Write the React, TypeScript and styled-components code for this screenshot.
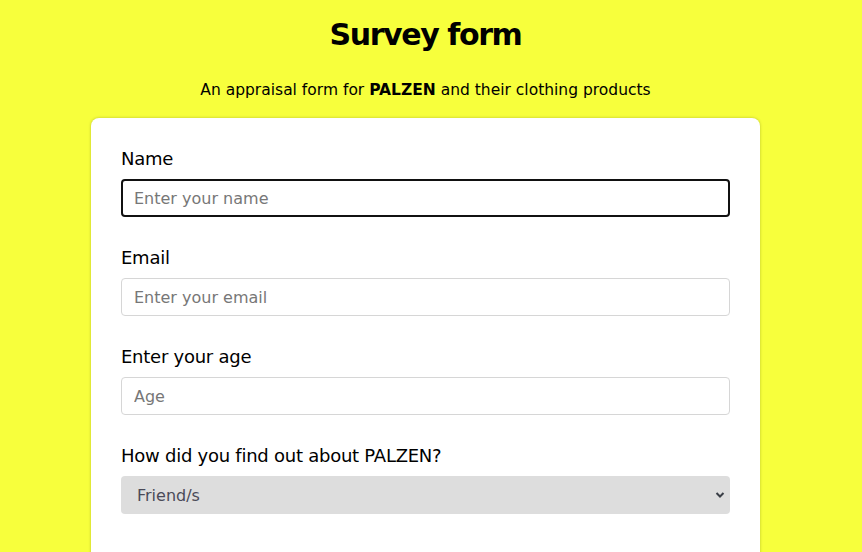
import React from "react";
import styled, { createGlobalStyle } from "styled-components";

const Global = createGlobalStyle`
  html, body { margin: 0; padding: 0; }
  body {
    background: #f7ff3c;
    font-family: "DejaVu Sans", "Noto Sans", sans-serif;
    color: #000;
  }
  * { box-sizing: border-box; }
`;

const Page = styled.div`
  display: flex;
  flex-direction: column;
  align-items: center;
  padding: 14px 11px 0 0;
`;

const Title = styled.h1`
  margin: 0;
  font-size: 30px;
  font-weight: 700;
  line-height: 42px;
  letter-spacing: -1.4px;
`;

const Subtitle = styled.p`
  margin: 23px 0 0;
  font-size: 15.5px;
  line-height: 22px;
`;

const Card = styled.form`
  margin-top: 17px;
  width: 669px;
  background: #fff;
  border-radius: 8px;
  box-shadow: 0 0 3px rgba(0, 0, 0, 0.25);
  padding: 28px 30px 60px;
  display: flex;
  flex-direction: column;
  gap: 28px;
`;

const Group = styled.div`
  display: flex;
  flex-direction: column;
  gap: 7px;
`;

const Label = styled.label`
  font-size: 18px;
  line-height: 26px;
  letter-spacing: -0.25px;
`;

const Input = styled.input<{ $focused?: boolean }>`
  height: 38px;
  width: 100%;
  border-radius: 4px;
  border: ${(p) => (p.$focused ? "2px solid #111" : "1px solid #d6d6d6")};
  padding: 0 ${(p) => (p.$focused ? "11px" : "12px")};
  font-family: inherit;
  font-size: 16px;
  outline: none;
  background: #fff;
  &::placeholder { color: #777; }
`;

const SelectWrap = styled.div`
  position: relative;
`;

const Select = styled.select`
  appearance: none;
  height: 38px;
  width: 100%;
  border: none;
  border-radius: 4px;
  background: #dddddd;
  color: #4a4a58;
  font-family: inherit;
  font-size: 16px;
  padding: 0 16px;
  outline: none;
`;

const Chevron = styled.svg`
  position: absolute;
  right: 5px;
  top: 15px;
  pointer-events: none;
`;

export default function App() {
  return (
    <>
      <Global />
      <Page>
        <Title>Survey form</Title>
        <Subtitle>
          An appraisal form for <b>PALZEN</b> and their clothing products
        </Subtitle>
        <Card onSubmit={(e) => e.preventDefault()}>
          <Group>
            <Label htmlFor="name">Name</Label>
            <Input id="name" $focused placeholder="Enter your name" />
          </Group>
          <Group>
            <Label htmlFor="email">Email</Label>
            <Input id="email" placeholder="Enter your email" />
          </Group>
          <Group>
            <Label htmlFor="age">Enter your age</Label>
            <Input id="age" placeholder="Age" />
          </Group>
          <Group>
            <Label htmlFor="find">How did you find out about PALZEN?</Label>
            <SelectWrap>
              <Select id="find" defaultValue="friends">
                <option value="friends">Friend/s</option>
                <option value="social">Social media</option>
                <option value="ads">Ads</option>
              </Select>
              <Chevron width="10" height="8" viewBox="0 0 10 8">
                <path d="M1.5 2 L5 5.5 L8.5 2" fill="none" stroke="#3a3f47" strokeWidth="2" />
              </Chevron>
            </SelectWrap>
          </Group>
        </Card>
      </Page>
    </>
  );
}
